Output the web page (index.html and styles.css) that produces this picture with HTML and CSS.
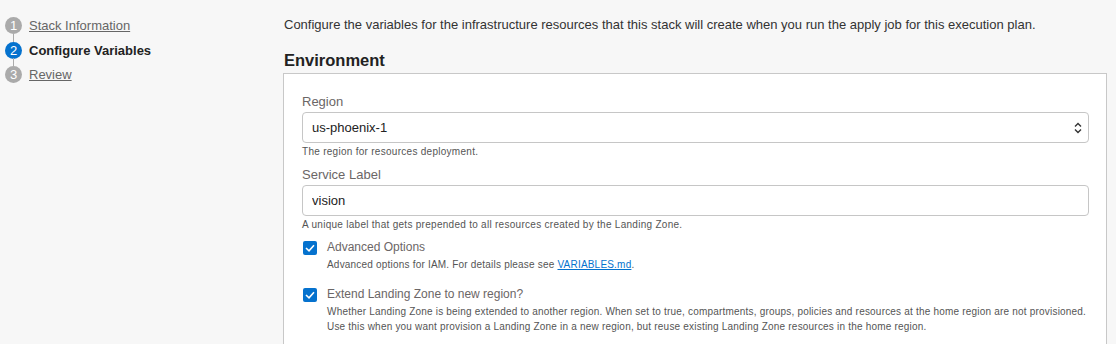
FILE: index.html
```html
<!doctype html>
<html lang="en">
<head>
  <meta charset="utf-8">
  <title>Create Stack - Configure Variables</title>
  <link rel="stylesheet" href="styles.css">
</head>
<body>

<div class="page">
  <nav class="steps">
    <div class="step done"><span class="num">1</span><a href="#">Stack Information</a></div>
    <div class="step current"><span class="num">2</span><span class="step-name">Configure Variables</span></div>
    <div class="step"><span class="num">3</span><a href="#">Review</a></div>
  </nav>

  <main class="content">
    <p class="intro">Configure the variables for the infrastructure resources that this stack will create when you run the apply job for this execution plan.</p>

    <h2>Environment</h2>

    <div class="panel">
      <div class="field">
        <label class="field-label" for="region">Region</label>
        <div class="select-wrap">
          <select id="region">
            <option>us-phoenix-1</option>
          </select>
          <svg class="chevrons" width="10" height="14" viewBox="0 0 10 14">
            <path d="M2 5.5 L5 2.5 L8 5.5" fill="none" stroke="#333" stroke-width="1.4"/>
            <path d="M2 8.5 L5 11.5 L8 8.5" fill="none" stroke="#333" stroke-width="1.4"/>
          </svg>
        </div>
        <div class="help">The region for resources deployment.</div>
      </div>

      <div class="field">
        <label class="field-label" for="service_label">Service Label</label>
        <input type="text" id="service_label" value="vision">
        <div class="help">A unique label that gets prepended to all resources created by the Landing Zone.</div>
      </div>

      <div class="check">
        <span class="box">
          <svg width="10" height="8" viewBox="0 0 10 8"><path d="M1 4 L4 6.8 L9 1.2" fill="none" stroke="#fff" stroke-width="1.6"/></svg>
        </span>
        <div>
          <div class="check-label">Advanced Options</div>
          <div class="help">Advanced options for IAM. For details please see <a href="#">VARIABLES.md</a>.</div>
        </div>
      </div>

      <div class="check">
        <span class="box">
          <svg width="10" height="8" viewBox="0 0 10 8"><path d="M1 4 L4 6.8 L9 1.2" fill="none" stroke="#fff" stroke-width="1.6"/></svg>
        </span>
        <div>
          <div class="check-label">Extend Landing Zone to new region?</div>
          <div class="help">Whether Landing Zone is being extended to another region. When set to true, compartments, groups, policies and resources at the home region are not provisioned. Use this when you want provision a Landing Zone in a new region, but reuse existing Landing Zone resources in the home region.</div>
        </div>
      </div>
    </div>
  </main>
</div>

</body>
</html>
```

FILE: styles.css
```css
body {
  font-family: "Liberation Sans", Arial, sans-serif;
  background: #f7f7f7;
  margin: 0;
  color: #333;
}

.page {
  display: flex;
}

.steps {
  width: 284px;
  flex-shrink: 0;
  padding: 17px 0 0 5px;
  box-sizing: border-box;
}

.step {
  display: flex;
  align-items: center;
  gap: 7px;
  height: 17px;
  margin-bottom: 7.5px;
  font-size: 13px;
  position: relative;
}

.step + .step::before {
  content: "";
  position: absolute;
  left: 8px;
  top: -8px;
  width: 1px;
  height: 8px;
  background: #aaa;
}

.num {
  width: 17px;
  height: 17px;
  border-radius: 50%;
  background: #aaa;
  color: #fff;
  font-size: 13px;
  display: flex;
  align-items: center;
  justify-content: center;
}

.step a {
  color: #666;
}

.current .num {
  background: #0572ce;
}

.step-name {
  font-weight: bold;
  color: #222;
}

.content {
  flex: 1;
  padding-right: 9px;
}

.intro {
  font-size: 13px;
  color: #333;
  margin: 17px 0 0;
  line-height: 16px;
}

h2 {
  font-size: 16.5px;
  color: #222;
  margin: 17px 0 3px;
  line-height: 20px;
}

.panel {
  background: #fff;
  border: 1px solid #c8c8c8;
  margin-left: -1px;
  padding: 20px 17px 12px 18px;
}

.field {
  margin-bottom: 8px;
}

.field-label {
  display: block;
  font-size: 13px;
  color: #6b6666;
  line-height: 16px;
  margin-bottom: 2px;
}

.select-wrap {
  position: relative;
}

select, input {
  display: block;
  width: 100%;
  box-sizing: border-box;
  height: 31px;
  border: 1px solid #c6c6c6;
  border-radius: 4px;
  background: #fff;
  font-family: inherit;
  font-size: 13px;
  color: #222;
  padding: 0 9px;
  margin: 0;
}

select {
  appearance: none;
  -webkit-appearance: none;
}

.chevrons {
  position: absolute;
  right: 6px;
  top: 9px;
  pointer-events: none;
}

.help {
  font-size: 10px;
  letter-spacing: 0.28px;
  color: #555;
  line-height: 15px;
  margin-top: 1px;
}

.help a {
  color: #0572ce;
}

.check {
  display: flex;
  align-items: flex-start;
  gap: 10px;
  margin-top: 2px;
  margin-left: 1px;
  margin-right: -8px;
}

.check + .check {
  margin-top: 15px;
}

.box {
  width: 14px;
  height: 14px;
  margin-top: 1px;
  border-radius: 2px;
  background: #0572ce;
  display: flex;
  align-items: center;
  justify-content: center;
  flex-shrink: 0;
}

.check-label {
  font-size: 12px;
  color: #6b6666;
  line-height: 14px;
}

.check .help {
  margin-top: 3px;
  letter-spacing: 0.2px;
}
```
